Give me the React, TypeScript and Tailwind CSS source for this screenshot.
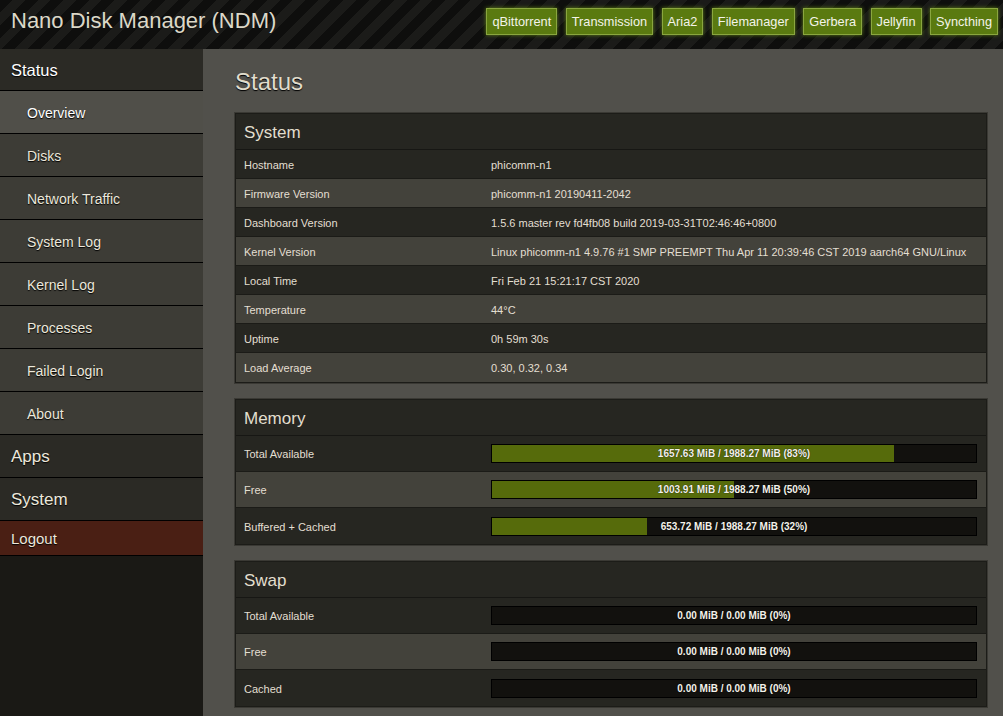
import React from "react";

const apps = ["qBittorrent", "Transmission", "Aria2", "Filemanager", "Gerbera", "Jellyfin", "Syncthing"];
const subItems = ["Overview", "Disks", "Network Traffic", "System Log", "Kernel Log", "Processes", "Failed Login", "About"];

const systemRows: [string, string][] = [
  ["Hostname", "phicomm-n1"],
  ["Firmware Version", "phicomm-n1 20190411-2042"],
  ["Dashboard Version", "1.5.6 master rev fd4fb08 build 2019-03-31T02:46:46+0800"],
  ["Kernel Version", "Linux phicomm-n1 4.9.76 #1 SMP PREEMPT Thu Apr 11 20:39:46 CST 2019 aarch64 GNU/Linux"],
  ["Local Time", "Fri Feb 21 15:21:17 CST 2020"],
  ["Temperature", "44°C"],
  ["Uptime", "0h 59m 30s"],
  ["Load Average", "0.30, 0.32, 0.34"],
];

const memRows: [string, string, number][] = [
  ["Total Available", "1657.63 MiB / 1988.27 MiB (83%)", 83],
  ["Free", "1003.91 MiB / 1988.27 MiB (50%)", 50],
  ["Buffered + Cached", "653.72 MiB / 1988.27 MiB (32%)", 32],
];

const swapRows: [string, string, number][] = [
  ["Total Available", "0.00 MiB / 0.00 MiB (0%)", 0],
  ["Free", "0.00 MiB / 0.00 MiB (0%)", 0],
  ["Cached", "0.00 MiB / 0.00 MiB (0%)", 0],
];

function Panel({ title, children }: { title: string; children: React.ReactNode }) {
  return (
    <div className="mb-[16px] bg-[#262621] border border-[#1c1c18] shadow-[0_0_0_1px_#3a3934]">
      <div className="h-[36px] flex items-center pl-[8px] pt-[2px] text-[17px] text-[#e2dece] border-b border-[#171714] shadow-[0_1px_0_#3b3a34]">
        {title}
      </div>
      {children}
    </div>
  );
}

function Bar({ text, pct }: { text: string; pct: number }) {
  return (
    <div className="relative h-[19px] border border-black bg-[#12110e]">
      <div className="absolute left-0 top-0 bottom-0 bg-[#566b0b]" style={{ width: `${pct}%` }} />
      <div className="relative text-center text-[10px] font-bold leading-[18px] text-[#f4f2ea] [text-shadow:0_0_1px_#000]">
        {text}
      </div>
    </div>
  );
}

function Row({ label, idx, last, h, children }: { label: string; idx: number; last: boolean; h: string; children: React.ReactNode }) {
  return (
    <div
      className={`${h} flex items-center pt-[2px] text-[11px] ${last ? "" : "border-b border-[#1b1b17]"} ${idx % 2 === 1 ? "bg-[#43423b]" : "bg-[#262621]"}`}
    >
      <div className="w-[255px] pl-[8px] shrink-0">{label}</div>
      {children}
    </div>
  );
}

export default function App() {
  return (
    <div className="w-[1003px] h-[716px] overflow-hidden flex flex-col font-['Liberation_Sans',Arial,sans-serif] bg-[#51504b]">
      <header className="h-[49px] shrink-0 flex items-start justify-between bg-[repeating-linear-gradient(135deg,#0e0e0d_0px,#0e0e0d_9px,#1b1b19_9px,#1b1b19_18px)]">
        <div className="pl-[11px] pt-[7px] text-[22px] leading-[28px] text-[#dcd8c8]">Nano Disk Manager (NDM)</div>
        <div className="flex gap-[8.5px] pt-[8px] pr-[5px]">
          {apps.map((a) => (
            <div
              key={a}
              className="h-[27px] px-[5px] pt-[1px] flex items-center border border-[#8aa63f] bg-[#5a7a10] shadow-[0_0_4px_#5f8018] text-[12.75px] text-[#f4f4ea]"
            >
              {a}
            </div>
          ))}
        </div>
      </header>
      <div className="flex flex-1 min-h-0">
        <aside className="w-[203px] shrink-0 bg-[#1a1915] flex flex-col text-[#ece8dc] [text-shadow:0_1px_1px_#000]">
          <div className="h-[42px] flex items-center pt-[2px] pl-[11px] text-[16.5px] text-white bg-[#2b2a25] border-b border-black">Status</div>
          {subItems.map((s, i) => (
            <div
              key={s}
              className={`h-[43px] flex items-center pt-[2px] pl-[27px] text-[14px] border-b border-black ${i === 0 ? "bg-[#504f49] text-white" : "bg-[#3d3c36]"}`}
            >
              {s}
            </div>
          ))}
          <div className="h-[43px] flex items-center pt-[2px] pl-[11px] text-[17px] bg-[#2b2a25] border-b border-black">Apps</div>
          <div className="h-[43px] flex items-center pt-[2px] pl-[11px] text-[17px] bg-[#2b2a25] border-b border-black">System</div>
          <div className="h-[35px] flex items-center pt-[2px] pl-[11px] text-[15px] bg-[#4a1f14] border-b border-black">Logout</div>
        </aside>
        <main className="flex-1 pl-[32px] pr-[16px] pt-[17px] text-[#e3dfd2]">
          <h1 className="h-[31px] leading-[32px] text-[24px] text-[#e0dccc] mb-[16px] [text-shadow:0_1px_1px_#000]">Status</h1>
          <Panel title="System">
            {systemRows.map(([k, v], i) => (
              <Row key={k} label={k} idx={i} last={i === systemRows.length - 1} h="h-[29px]">
                <div className="flex-1 whitespace-nowrap">{v}</div>
              </Row>
            ))}
          </Panel>
          <Panel title="Memory">
            {memRows.map(([k, t, p], i) => (
              <Row key={k} label={k} idx={i} last={i === memRows.length - 1} h="h-[36px]">
                <div className="flex-1 pr-[9px] -mt-[2px]">
                  <Bar text={t} pct={p} />
                </div>
              </Row>
            ))}
          </Panel>
          <Panel title="Swap">
            {swapRows.map(([k, t, p], i) => (
              <Row key={k} label={k} idx={i} last={i === swapRows.length - 1} h="h-[36px]">
                <div className="flex-1 pr-[9px] -mt-[2px]">
                  <Bar text={t} pct={p} />
                </div>
              </Row>
            ))}
          </Panel>
        </main>
      </div>
    </div>
  );
}
